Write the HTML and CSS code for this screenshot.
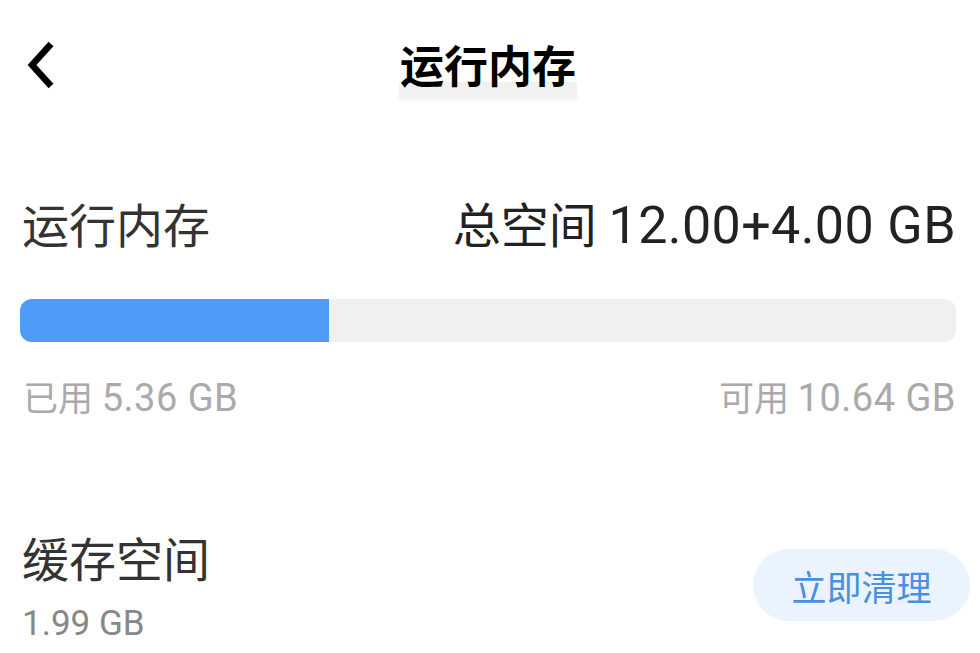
FILE: index.html
```html
<!DOCTYPE html>
<html lang="zh">
<head>
<meta charset="utf-8">
<link rel="stylesheet" href="styles.css">
</head>
<body>
<div class="page">
  <header class="topbar">
    <svg class="back" viewBox="0 0 32 48" width="32" height="48"><path d="M26 3 L7 24 L26 45" fill="none" stroke="#000" stroke-width="6.5" stroke-linecap="butt" stroke-linejoin="miter"/></svg>
    <div class="title">运行内存</div>
  </header>
  <section class="mem">
    <div class="row">
      <div class="label">运行内存</div>
      <div class="total">总空间 <span class="num">12.00+4.00 GB</span></div>
    </div>
    <div class="bar"><div class="fill" style="width:33%"></div></div>
    <div class="row sub">
      <div>已用 <span class="num">5.36 GB</span></div>
      <div>可用 <span class="num">10.64 GB</span></div>
    </div>
  </section>
  <section class="cache">
    <div class="cinfo">
      <div class="label">缓存空间</div>
      <div class="csize">1.99 GB</div>
    </div>
    <div class="btn">立即清理</div>
  </section>
</div>
</body>
</html>
```
FILE: styles.css
```css
html, body { margin: 0; padding: 0; background: #fff; }
body { font-family: Roboto, "Noto Sans CJK SC", sans-serif; width: 980px; height: 653px; overflow: hidden; }
.page { padding: 0 24px 0 20px; }
.topbar { position: relative; height: 130px; display: flex; align-items: flex-start; justify-content: center; }
.back { position: absolute; left: 5px; top: 41px; }
.title { margin-top: 38px; font-size: 44px; font-weight: 700; color: #000; line-height: 60px; position: relative; z-index: 0; padding: 0 1px; }
.title::after { content: ""; position: absolute; left: 0; right: 0; top: 44px; height: 20px; background: linear-gradient(#f0f0f0, #f3f3f3 80%, #fbfbfb); z-index: -1; }
.mem { padding-top: 68px; }
.row { display: flex; justify-content: space-between; align-items: baseline; }
.label { font-size: 47px; color: #333; line-height: 56px; padding-left: 2px; }
.total { font-size: 48px; color: #222; line-height: 56px; }
.total .num { font-size: 52px; line-height: 56px; letter-spacing: 0.4px; }
.bar { margin-top: 44px; height: 43px; border-radius: 12px; background: #f0f0f0; overflow: hidden; }
.fill { height: 100%; background: #4e9cf8; }
.sub { margin-top: 34px; font-size: 35px; color: #aaa; line-height: 44px; padding-left: 3px; }
.sub .num { font-size: 38px; line-height: 44px; letter-spacing: 0.5px; }
.cache { margin-top: 111px; display: flex; justify-content: space-between; align-items: flex-start; margin-right: -14px; }
.cinfo { display: flex; flex-direction: column; }
.csize { font-size: 35px; color: #888; line-height: 44px; margin-top: 13px; padding-left: 2px; }
.btn { margin-top: 16px; width: 217px; height: 72px; border-radius: 36px; background: #eaf3fe; color: #4a8fe0; font-size: 35px; display: flex; align-items: center; justify-content: center; }
```
